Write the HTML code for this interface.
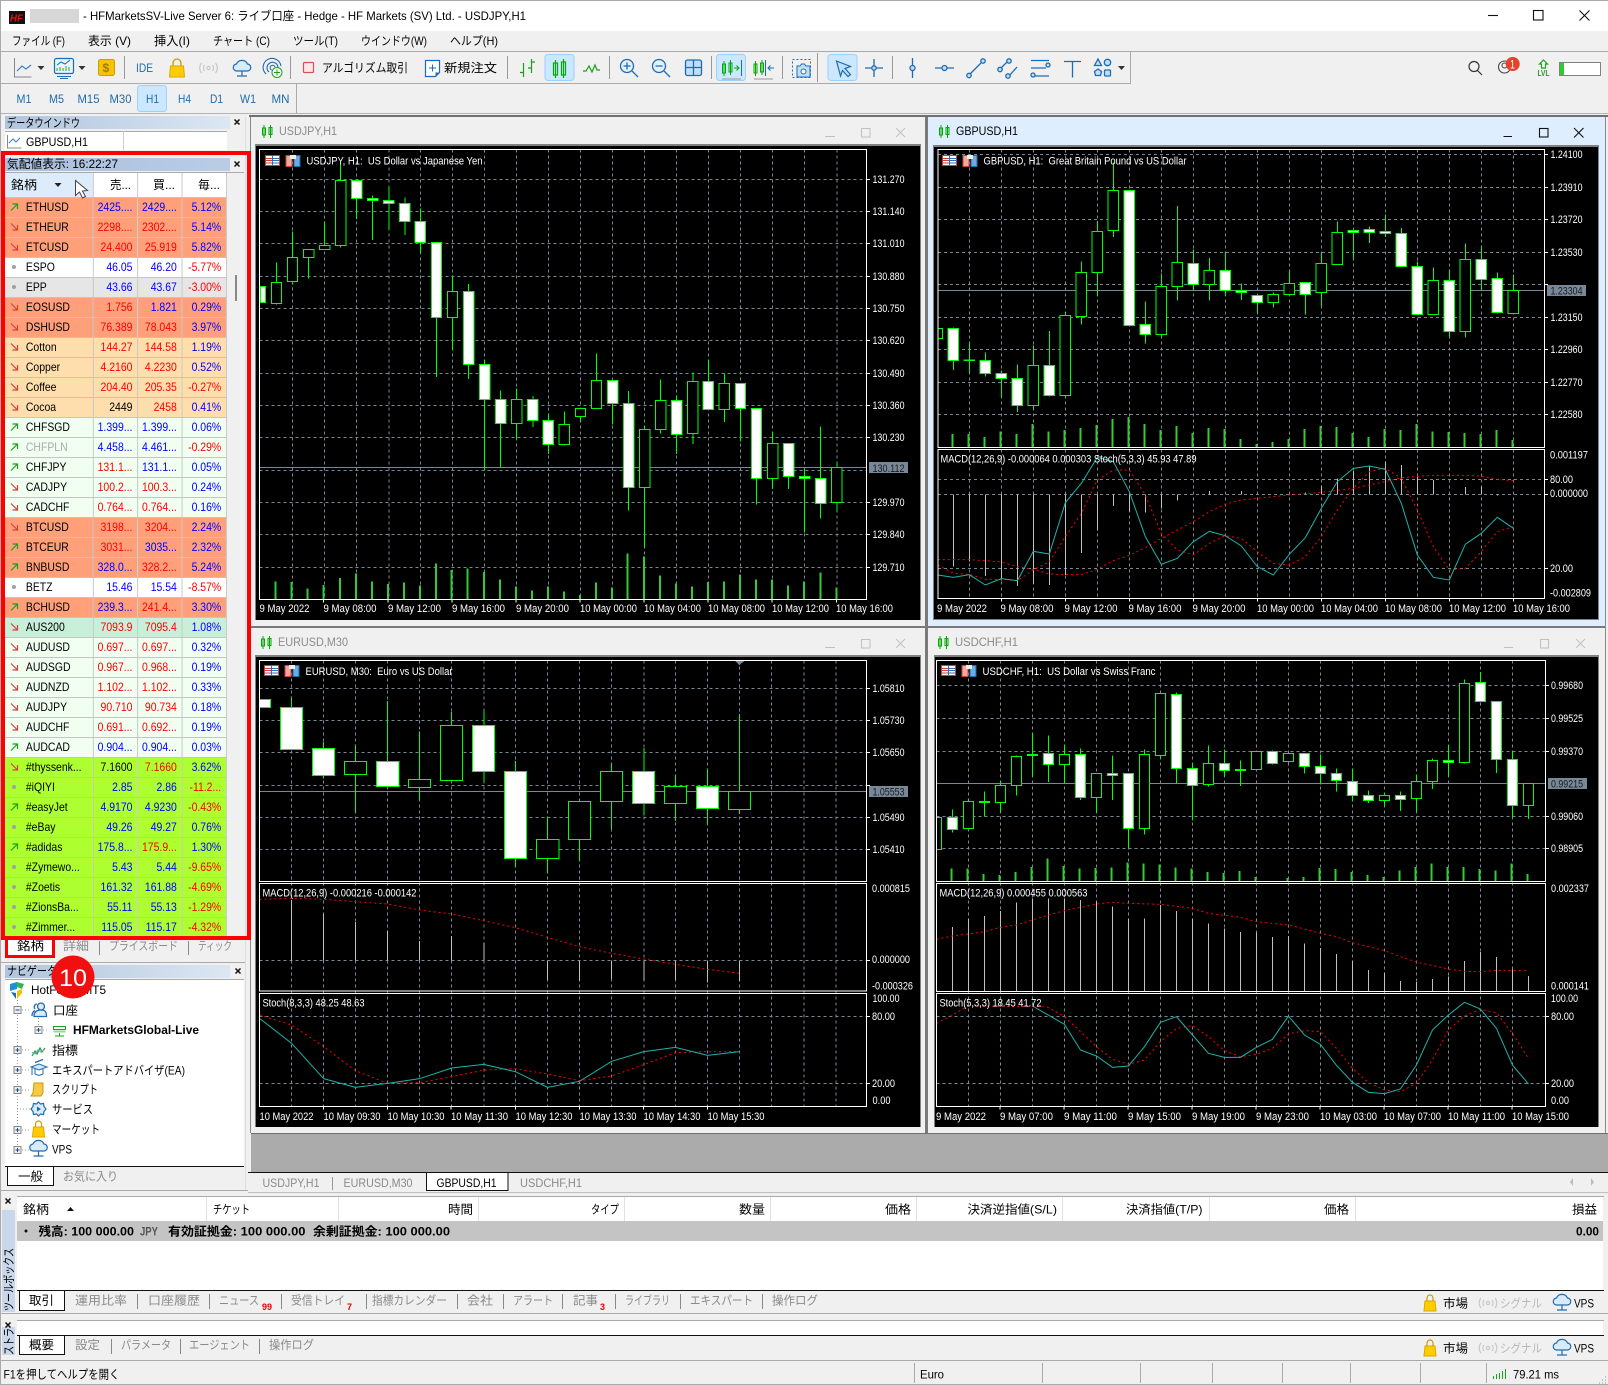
<!DOCTYPE html>
<html><head><meta charset="utf-8"><title>HFMarkets</title>
<style>
html,body{margin:0;padding:0;background:#f0f0f0;width:1608px;height:1385px;overflow:hidden}
#tb{position:absolute;left:5px;top:173px;width:254px;transform:scaleX(.87);transform-origin:0 0;z-index:0}
table{border-collapse:collapse;table-layout:fixed;width:254px;font:12px "Liberation Sans","Noto Sans CJK JP",sans-serif}
td{height:19px;line-height:16px;padding:0 5px 0 0;text-align:right;border-right:1px solid #c4c4c4;border-bottom:1px solid #c4c4c4;white-space:nowrap;overflow:hidden}
tr{height:20px}
tr.hd{height:24px}tr.hd td{height:23px;background:#fff}tr.hd td:first-child{background:#dcecfb}
td:first-child{text-align:left;padding:0 0 0 24px;color:#000}
.s td{background:#ffa07a}.m td{background:#ffdead}.h td{background:#f0fff0}.y td{background:#adff2f}.w td{background:#fff}.e td{background:#e6e6e6}.g td{background:#c8f0d8}
td.b{color:#00f}td.r{color:#f00}td.k{color:#000}
#o{position:absolute;left:0;top:0;z-index:1}
text{font:12px "Liberation Sans","Noto Sans CJK JP",sans-serif;fill:#000}
.gy{fill:#8a8a8a}.lg{fill:#b8b8b8}.bl{fill:#1f6bb0}.bd{font-weight:bold}
.x{font-size:11px;fill:#fff}.dk{font-size:11px;fill:#1a1a1a}
.sub{font-size:9px;font-weight:bold;fill:#e00000}
.cr{shape-rendering:crispEdges}
.ic{fill:none;stroke:#1f6bb0;stroke-width:1.3}
.c path{vector-effect:non-scaling-stroke;fill:none;shape-rendering:crispEdges}
.c .gr{stroke:#778899;stroke-dasharray:3 3}
.c .wk{stroke:#0f0}
.c .wb{stroke:#0f0;fill:#fff}
.c .bb{stroke:#0f0;fill:#000}
.c .vo{stroke:#32cd32;stroke-width:2}
.c .fr{stroke:#fff}
.c .hs{stroke:#c0c0c0}
.c .cu{stroke:#778899}
.c .te{stroke:#20b2aa;shape-rendering:auto}
.c .re{stroke:#f00;stroke-dasharray:2 3;shape-rendering:auto}
.c .tri{fill:#778899}
</style></head><body>
<div id="tb"><table><colgroup><col style="width:101px"><col style="width:51px"><col style="width:51px"><col style="width:51px"></colgroup>
<tr class="hd"><td></td><td></td><td></td><td></td></tr>
<tr class="s"><td>ETHUSD</td><td class="b">2425....</td><td class="b">2429....</td><td class="b">5.12%</td></tr>
<tr class="s"><td>ETHEUR</td><td class="r">2298....</td><td class="r">2302....</td><td class="b">5.14%</td></tr>
<tr class="s"><td>ETCUSD</td><td class="r">24.400</td><td class="r">25.919</td><td class="b">5.82%</td></tr>
<tr class="w"><td>ESPO</td><td class="b">46.05</td><td class="b">46.20</td><td class="r">-5.77%</td></tr>
<tr class="e"><td>EPP</td><td class="b">43.66</td><td class="b">43.67</td><td class="r">-3.00%</td></tr>
<tr class="s"><td>EOSUSD</td><td class="r">1.756</td><td class="b">1.821</td><td class="b">0.29%</td></tr>
<tr class="s"><td>DSHUSD</td><td class="r">76.389</td><td class="r">78.043</td><td class="b">3.97%</td></tr>
<tr class="m"><td>Cotton</td><td class="r">144.27</td><td class="r">144.58</td><td class="b">1.19%</td></tr>
<tr class="m"><td>Copper</td><td class="r">4.2160</td><td class="r">4.2230</td><td class="b">0.52%</td></tr>
<tr class="m"><td>Coffee</td><td class="r">204.40</td><td class="r">205.35</td><td class="r">-0.27%</td></tr>
<tr class="m"><td>Cocoa</td><td class="k">2449</td><td class="r">2458</td><td class="b">0.41%</td></tr>
<tr class="h"><td>CHFSGD</td><td class="b">1.399...</td><td class="b">1.399...</td><td class="b">0.06%</td></tr>
<tr class="h"><td style="color:#aaa">CHFPLN</td><td class="b">4.458...</td><td class="b">4.461...</td><td class="r">-0.29%</td></tr>
<tr class="h"><td>CHFJPY</td><td class="r">131.1...</td><td class="b">131.1...</td><td class="b">0.05%</td></tr>
<tr class="h"><td>CADJPY</td><td class="r">100.2...</td><td class="r">100.3...</td><td class="b">0.24%</td></tr>
<tr class="h"><td>CADCHF</td><td class="r">0.764...</td><td class="r">0.764...</td><td class="b">0.16%</td></tr>
<tr class="s"><td>BTCUSD</td><td class="r">3198...</td><td class="r">3204...</td><td class="b">2.24%</td></tr>
<tr class="s"><td>BTCEUR</td><td class="r">3031...</td><td class="b">3035...</td><td class="b">2.32%</td></tr>
<tr class="s"><td>BNBUSD</td><td class="b">328.0...</td><td class="r">328.2...</td><td class="b">5.24%</td></tr>
<tr class="w"><td>BETZ</td><td class="b">15.46</td><td class="b">15.54</td><td class="r">-8.57%</td></tr>
<tr class="s"><td>BCHUSD</td><td class="b">239.3...</td><td class="r">241.4...</td><td class="b">3.30%</td></tr>
<tr class="g"><td>AUS200</td><td class="r">7093.9</td><td class="r">7095.4</td><td class="b">1.08%</td></tr>
<tr class="h"><td>AUDUSD</td><td class="r">0.697...</td><td class="r">0.697...</td><td class="b">0.32%</td></tr>
<tr class="h"><td>AUDSGD</td><td class="r">0.967...</td><td class="r">0.968...</td><td class="b">0.19%</td></tr>
<tr class="h"><td>AUDNZD</td><td class="r">1.102...</td><td class="r">1.102...</td><td class="b">0.33%</td></tr>
<tr class="h"><td>AUDJPY</td><td class="r">90.710</td><td class="r">90.734</td><td class="b">0.18%</td></tr>
<tr class="h"><td>AUDCHF</td><td class="r">0.691...</td><td class="r">0.692...</td><td class="b">0.19%</td></tr>
<tr class="h"><td>AUDCAD</td><td class="b">0.904...</td><td class="b">0.904...</td><td class="b">0.03%</td></tr>
<tr class="y"><td>#thyssenk...</td><td class="k">7.1600</td><td class="r">7.1660</td><td class="b">3.62%</td></tr>
<tr class="y"><td>#iQIYI</td><td class="b">2.85</td><td class="b">2.86</td><td class="r">-11.2...</td></tr>
<tr class="y"><td>#easyJet</td><td class="b">4.9170</td><td class="b">4.9230</td><td class="r">-0.43%</td></tr>
<tr class="y"><td>#eBay</td><td class="b">49.26</td><td class="b">49.27</td><td class="b">0.76%</td></tr>
<tr class="y"><td>#adidas</td><td class="b">175.8...</td><td class="r">175.9...</td><td class="b">1.30%</td></tr>
<tr class="y"><td>#Zymewo...</td><td class="b">5.43</td><td class="b">5.44</td><td class="r">-9.65%</td></tr>
<tr class="y"><td>#Zoetis</td><td class="b">161.32</td><td class="b">161.88</td><td class="r">-4.69%</td></tr>
<tr class="y"><td>#ZionsBa...</td><td class="b">55.11</td><td class="b">55.13</td><td class="r">-1.29%</td></tr>
<tr class="y"><td>#Zimmer...</td><td class="b">115.05</td><td class="b">115.17</td><td class="r">-4.32%</td></tr>
</table></div>

<svg id="o" width="1608" height="1385" viewBox="0 0 1608 1385" xmlns="http://www.w3.org/2000/svg">
<defs>
<linearGradient id="g1"><stop offset="0" stop-color="#b0c4dd"/><stop offset="1" stop-color="#dce7f2"/></linearGradient>
<linearGradient id="g2"><stop offset="0" stop-color="#a8bedb"/><stop offset="1" stop-color="#bacde5"/></linearGradient>
<g id="u"><path d="M11 13.5l6.5-6.5M12.5 7h5v5" fill="none" stroke="#1ba01b" stroke-width="1.2"/></g>
<g id="d"><path d="M11 6.5l6.5 6.5M12.5 13h5V8" fill="none" stroke="#d84040" stroke-width="1.2"/></g>
<g id="p"><circle cx="14" cy="10" r="2" fill="#a0a0a0"/></g>
<g id="ci" fill="none" stroke="#0a0"><rect x=".5" y="3" width="3" height="7"/><path d="M2 0v13"/><rect x="7" y="2.5" width="3" height="7"/><path d="M8.5 0v13"/></g>
<g id="ti"><rect x=".5" y=".5" width="14" height="10" fill="#fff" stroke="#d23b3b"/><path d="M1 3.5h6M1 5.5h6M1 8h6" stroke="#d23b3b"/><path d="M8 3.5h6M8 5.5h6M8 8h6" stroke="#2a6fb5"/><path d="M7.5 1v9" stroke="#2a6fb5"/>
<path d="M21 .5h6v11h-6z" fill="#f5a8a0" stroke="#d23b3b"/><path d="M29 .5h6v11h-6z" fill="#69aee0" stroke="#1f6bb0"/><rect x="25" y="0" width="6" height="4" fill="#eee"/></g>
<g id="pl"><rect x="-3.5" y="-3.5" width="7" height="7" fill="#eee" stroke="#888"/><path d="M-2 0h4M0-2v4" stroke="#1f4f8f"/></g>
<g id="mi"><rect x="-3.5" y="-3.5" width="7" height="7" fill="#eee" stroke="#888"/><path d="M-2 0h4" stroke="#1f4f8f"/></g>
<g id="bag"><path d="M-6 8l1-10h10l1 10z" fill="#fc0" stroke="#d9a800"/><path d="M-3-2v-3a3 3 0 0 1 6 0v3" fill="none" stroke="#c89b00" stroke-width="1.2"/></g>
<g id="cl" fill="none" stroke="#1f6bb0" stroke-width="1.2"><path d="M-5 3a3.5 3.5 0 0 1-.5-7a6 6 0 0 1 11 0a3.5 3.5 0 0 1-.5 7z" fill="#d8ebfb"/><path d="M0 3v5M-5 8h10"/></g>
<g id="sig" fill="none" stroke="#c8c8c8" stroke-width="1.2"><circle r="1.6"/><path d="M-4-3a5 5 0 0 0 0 6M4-3a5 5 0 0 1 0 6M-7-5a8 8 0 0 0 0 10M7-5a8 8 0 0 1 0 10"/></g>
</defs>

<!-- window frame / bars -->
<g class="cr">
<rect x="0" y="0" width="1608" height="1" fill="#aaa"/>
<rect x="0" y="1" width="1608" height="30" fill="#fff"/>
<rect x="0" y="51" width="1608" height="1" fill="#aaa"/>
<rect x="0" y="83" width="1130" height="1" fill="#aaa"/>
<rect x="1130" y="51" width="1" height="33" fill="#aaa"/>
<rect x="296" y="84" width="1" height="29" fill="#aaa"/>
<rect x="0" y="113" width="1608" height="1" fill="#b4b4b4"/>
<rect x="249" y="115" width="1359" height="2" fill="#707070"/>
<rect x="0" y="0" width="1" height="1385" fill="#aaa"/>
<!-- MDI -->
<rect x="928" y="117" width="677" height="509" fill="#deeeff"/>
<rect x="925" y="117" width="3" height="510" fill="#7a7a7a"/>
<rect x="250" y="626" width="1355" height="2" fill="#7a7a7a"/>
<rect x="925" y="628" width="3" height="505" fill="#7a7a7a"/>
<rect x="251" y="1133" width="1357" height="39" fill="#ababab"/>
<rect x="251" y="1133" width="1357" height="1" fill="#6f6f6f"/>
<rect x="250" y="117" width="1" height="1016" fill="#8a8a8a"/>
<rect x="1605" y="117" width="1" height="1016" fill="#8a8a8a"/>
<!-- black chart areas -->
<rect x="255" y="144" width="666" height="476" fill="#808080"/>
<rect x="256" y="146" width="664" height="474" fill="#000"/>
<rect x="933" y="145" width="666" height="475" fill="#808080"/>
<rect x="934" y="147" width="664" height="472" fill="#000"/>
<rect x="255" y="655" width="666" height="472" fill="#808080"/>
<rect x="256" y="657" width="664" height="470" fill="#000"/>
<rect x="934" y="655" width="665" height="472" fill="#808080"/>
<rect x="935" y="657" width="663" height="470" fill="#000"/>
<!-- chart tabs -->
<rect x="248" y="1172" width="1360" height="20" fill="#f0f0f0"/>
<rect x="248" y="1172" width="1360" height="1" fill="#111"/>
<rect x="248" y="1192" width="1360" height="1" fill="#c0c0c0"/>
<rect x="426" y="1173" width="82" height="18" fill="#fff"/>
<path d="M426.5 1173v17.5h81.5v-17.5" fill="none" stroke="#111"/>
<rect x="332" y="1177" width="1" height="13" fill="#999"/>
<!-- toolbox -->
<rect x="17" y="1196" width="1587" height="1" fill="#aaa"/>
<rect x="17" y="1197" width="1586" height="93" fill="#fff"/>
<rect x="17" y="1221" width="1586" height="20" fill="#c4c4c4"/>
<path d="M206.5 1197v24M338.5 1197v24M478.5 1197v24M624.5 1197v24M770.5 1197v24M916.5 1197v24M1062.5 1197v24M1209.5 1197v24M1355.5 1197v24" stroke="#e0e0e0"/>
<rect x="17" y="1290" width="1587" height="1" fill="#111"/>
<rect x="19" y="1291" width="45" height="19" fill="#fff"/>
<path d="M19.5 1291v19.5h45v-19.5" fill="none" stroke="#111"/>
<path d="M137.5 1294v15M209.5 1294v15M281.5 1294v15M366.5 1294v15M457.5 1294v15M503.5 1294v15M562.5 1294v15M615.5 1294v15M680.5 1294v15M762.5 1294v15" stroke="#888"/>
<rect x="0" y="1313" width="1608" height="1" fill="#aaa"/>
<rect x="2" y="1210" width="13" height="102" fill="#c8d8ea"/>
<!-- tester -->
<rect x="17" y="1320" width="1587" height="1" fill="#aaa"/>
<rect x="17" y="1321" width="1586" height="14" fill="#fff"/>
<rect x="17" y="1335" width="1587" height="1" fill="#111"/>
<rect x="19" y="1336" width="45" height="18" fill="#fff"/>
<path d="M19.5 1336v18.5h45v-18.5" fill="none" stroke="#111"/>
<path d="M111.5 1339v15M180.5 1339v15M259.5 1339v15" stroke="#888"/>
<rect x="2" y="1327" width="13" height="28" fill="#c8d8ea"/>
<!-- status -->
<rect x="0" y="1360" width="1608" height="1" fill="#aaa"/>
<rect x="0" y="1384" width="1608" height="1" fill="#aaa"/>
<path d="M914.5 1363v20M1042.5 1363v20M1140.5 1363v20M1212.5 1363v20M1282.5 1363v20M1350.5 1363v20M1420.5 1363v20M1486.5 1363v20" stroke="#aaa"/>
<!-- left panels -->
<rect x="5" y="120" width="225" height="13" fill="url(#g1)" transform="translate(0,-4)"/>
<rect x="5" y="131" width="222" height="19" fill="#fff"/>
<rect x="5" y="131" width="222" height="1" fill="#aaa"/>
<rect x="123" y="131" width="1" height="19" fill="#ccc"/>
<rect x="5" y="158" width="225" height="13" fill="url(#g2)"/>
<rect x="5" y="172" width="239" height="1" fill="#aaa"/>
<rect x="235" y="275" width="2" height="26" fill="#888"/>
<rect x="8" y="938" width="44" height="18" fill="#fff"/>
<path d="M99.5 941v14M188.5 941v14" stroke="#888"/>
<rect x="0" y="962" width="246" height="1" fill="#aaa"/>
<rect x="5" y="965" width="225" height="13" fill="url(#g1)"/>
<rect x="5" y="979" width="239" height="187" fill="#fff"/>
<rect x="5" y="979" width="239" height="1" fill="#aaa"/>
<rect x="5" y="1166" width="239" height="1" fill="#111"/>
<rect x="7" y="1167" width="46" height="18" fill="#fff"/>
<path d="M7.5 1167v18.5h46v-18.5" fill="none" stroke="#111"/>
<rect x="245" y="117" width="1" height="1073" fill="#ddd"/>
<rect x="0" y="1190" width="248" height="1" fill="#aaa"/>
</g>

<!-- Buttons -->
<g fill="#cce8ff" stroke="#99d1ff"><rect x="137.5" y="85.5" width="29" height="26" rx="3"/><rect x="545" y="54.5" width="29" height="26" rx="3"/><rect x="716.5" y="54.5" width="29" height="26" rx="3"/><rect x="828" y="54.5" width="29" height="26" rx="3"/></g>

<!-- toolbar separators -->
<path class="cr" d="M124.5 56v23M290.5 56v23M507.5 56v23M609.5 56v23M711.5 56v23M782.5 56v23M817.5 53v29M892.5 56v23" stroke="#999"/>

<!-- Toolbar icons -->
<path d="M14.5 58v19h17" fill="none" stroke="#888"/><path d="M17 71l5-5 4 3 5-4" fill="none" stroke="#3a80c0" stroke-width="1.2"/>
<path d="M37.5 66h7l-3.5 4zM78.5 66h7l-3.500 4zM1118 66h7l-3.500 4z" fill="#333"/>
<rect x="54.500" y="58.500" width="19" height="15" rx="2" fill="#e8f3fc" stroke="#1f6bb0" stroke-width="1.2"/><path d="M57 71v-3M60 71v-4M63 71v-3M66 71v-5M69 71v-4" stroke="#2aa82a"/><path d="M57 65l4-3 4 2 5-4" fill="none" stroke="#1f6bb0"/><path d="M57 76.500h14M60 78.500h8" stroke="#1f6bb0"/>
<rect x="98.500" y="59.500" width="16" height="16" rx="2" fill="#f5c400" stroke="#c9a000"/><text x="102.500" y="72" class="bd" style="fill:#a57700">$</text>
<path d="M169.500 77l1-11h13l1 11z" fill="#fc0" stroke="#d9a800"/><path d="M173 66v-3a4 4 0 0 1 8 0v3" fill="none" stroke="#c89b00" stroke-width="1.3"/>
<use href="#sig" x="208.500" y="68"/>
<use href="#cl" x="242" y="68"/>
<g fill="none" stroke="#1f6bb0" stroke-width="1.1"><path d="M266 74a9 9 0 1 1 15-8M269 72a5.500 5.500 0 1 1 9-4.500M271.500 70a2.500 2.500 0 1 1 3.500-3"/></g><circle cx="277" cy="72.500" r="5" fill="#fff" stroke="#1aa01a"/><path d="M274 72.500h6M277 69.500v6" stroke="#1aa01a"/>
<rect x="303.500" y="62.500" width="10" height="10" rx="1" fill="#ffe8e8" stroke="#e05050" stroke-width="1.2"/>
<path d="M425.500 60.500h14v12l-4 4h-10z" fill="#fff" stroke="#1f6bb0" stroke-width="1.2"/><path d="M429 68h7M432.500 64.500v7" stroke="#1f6bb0"/><path d="M435.500 76.500l4-4h-4z" fill="#1f6bb0"/>
<path d="M523.500 63v14M520 72.500h3.500M531.500 59v14M531.500 62h3.500M528 68h3.500" fill="none" stroke="#1aa01a" stroke-width="1.2"/>
<g fill="none" stroke="#0a0" stroke-width="1.2"><rect x="553.500" y="63" width="4" height="12"/><path d="M555.500 60v18"/><rect x="561.500" y="62" width="4" height="13"/><path d="M563.500 59v19"/></g>
<path d="M583 71h3l3-5 3 6 3-7 2 5h3" fill="none" stroke="#1aa01a" stroke-width="1.2"/>
<g class="ic"><circle cx="627" cy="66" r="6.500" fill="#e3f1fc"/><path d="M623.500 66h7M627 62.500v7M632 71l6 6"/><circle cx="659" cy="66" r="6.500" fill="#e3f1fc"/><path d="M655.500 66h7M664 71l6 6"/><rect x="685.500" y="60" width="16" height="15.500" rx="2" fill="#bfe0fa"/><path d="M693.500 60v15.500M685.500 67.500h16"/></g>
<g fill="none" stroke="#0a0"><rect x="722.500" y="64" width="3" height="9"/><path d="M724 61v15"/><rect x="729" y="63" width="3" height="9"/><path d="M730.500 60v15"/><path d="M734 68h5M736.500 65.500l2.500 2.500-2.500 2.500"/></g><path d="M741.500 60v16" stroke="#1f6bb0"/><path d="M722 79h19" stroke="#999"/>
<g fill="none" stroke="#0a0"><rect x="754" y="64" width="3" height="9"/><path d="M755.500 61v15"/><rect x="760.500" y="63" width="3" height="9"/><path d="M762 60v15"/></g><path d="M765.500 60v16M768 68h6M770.500 65.500l-2.500 2.500 2.500 2.500" fill="none" stroke="#1f6bb0"/><path d="M754 79h19" stroke="#999"/>
<rect x="792.500" y="59.500" width="18" height="18" fill="none" stroke="#1f6bb0" stroke-dasharray="2 2"/><path d="M797 66h3l1.500-2h3l1.500 2h4v11h-13z" fill="#bfe0fa" stroke="#1f6bb0"/><circle cx="803.500" cy="71.500" r="2.500" fill="#fff" stroke="#1f6bb0"/>
<path d="M836.500 61l14 5.500-5.500 2 5.500 6-2.500 2-5.500-6-2 5.500z" fill="#bfe0fa" stroke="#1f6bb0" stroke-width="1.2"/>
<g class="ic"><path d="M865 68h18M874 59v18"/><circle cx="874" cy="68" r="2.200" fill="#bfe0fa"/><path d="M912.500 58v20"/><circle cx="912.500" cy="68" r="2.500" fill="#bfe0fa"/><path d="M935 68h19"/><circle cx="944.500" cy="68" r="2.500" fill="#bfe0fa"/><path d="M970 74l11-11"/><circle cx="969" cy="75.500" r="2.200" fill="#bfe0fa"/><circle cx="983" cy="61" r="2.200" fill="#bfe0fa"/><path d="M1001 68l7-7M1009 76l8-9"/><circle cx="1000" cy="69.500" r="2.200" fill="#bfe0fa"/><circle cx="1009" cy="61" r="2.200" fill="#bfe0fa"/><circle cx="1008" cy="76" r="2.200" fill="#bfe0fa"/><path d="M1031 60.500h18M1031 68h15M1034 76h15"/><circle cx="1048" cy="65" r="2" fill="#bfe0fa"/><circle cx="1033" cy="75" r="2" fill="#bfe0fa"/><path d="M1064 61.500h17M1072.500 61.500v16"/><path d="M1098 59l3.500 6.500h-7z" fill="#bfe0fa"/><circle cx="1107.500" cy="62.500" r="3.200" fill="#bfe0fa"/><path d="M1098 69l3.500 2.500-1 4h-5l-1-4z" fill="#bfe0fa"/><rect x="1104.500" y="70" width="6" height="6" rx="1" fill="#bfe0fa"/></g>
<circle cx="1474" cy="66.500" r="5" fill="none" stroke="#333" stroke-width="1.200"/><path d="M1477.500 70.500l4.500 4.500" stroke="#333" stroke-width="1.200"/>
<circle cx="1504.500" cy="67" r="6" fill="none" stroke="#444" stroke-width="1.100"/><circle cx="1504.500" cy="65.500" r="2.500" fill="none" stroke="#444"/>
<circle cx="1512.700" cy="64" r="7" fill="#e8402a"/><text x="1510" y="68.500" textLength="5" lengthAdjust="spacingAndGlyphs" style="fill:#fff">1</text>
<path d="M1543.500 60l4 4h-2v4h-4v-4h-2z" fill="#fff" stroke="#1aa01a" stroke-width="1.200"/><text x="1537.500" y="76" textLength="12" lengthAdjust="spacingAndGlyphs" style="font-size:8px;font-weight:bold;fill:#1aa01a">LVL</text>
<rect x="1559.500" y="62.500" width="41" height="13" fill="#fff" stroke="#808080"/><rect x="1560" y="63" width="4" height="12" fill="#2ecc2e"/>

<!-- title bar -->
<rect x="9" y="11" width="16" height="13" fill="#111"/><text x="10" y="21.500" textLength="13" lengthAdjust="spacingAndGlyphs" class="bd" style="font-size:10px;font-style:italic;fill:#d11">HF</text>
<rect x="30" y="9" width="49" height="14" fill="#d6d6d6"/>
<text x="83" y="20" textLength="443" lengthAdjust="spacingAndGlyphs">- HFMarketsSV-Live Server 6: ライブ口座 - Hedge - HF Markets (SV) Ltd. - USDJPY,H1</text>
<path d="M1488 15.500h10" stroke="#111" stroke-width="1.100"/><rect x="1533.500" y="10.500" width="9.500" height="9.500" fill="none" stroke="#111" stroke-width="1.100"/><path d="M1579.500 10.500l10 10m0-10l-10 10" stroke="#111" stroke-width="1.100"/>
<!-- menu -->
<text x="12" y="45" textLength="53" lengthAdjust="spacingAndGlyphs">ファイル (F)</text>
<text x="88" y="45" textLength="43" lengthAdjust="spacingAndGlyphs">表示 (V)</text>
<text x="154" y="45" textLength="36" lengthAdjust="spacingAndGlyphs">挿入(I)</text>
<text x="213" y="45" textLength="57" lengthAdjust="spacingAndGlyphs">チャート (C)</text>
<text x="293" y="45" textLength="45" lengthAdjust="spacingAndGlyphs">ツール(T)</text>
<text x="361" y="45" textLength="66" lengthAdjust="spacingAndGlyphs">ウインドウ(W)</text>
<text x="450" y="45" textLength="48" lengthAdjust="spacingAndGlyphs">ヘルプ(H)</text>
<text x="136" y="72" textLength="17" lengthAdjust="spacingAndGlyphs" class="bl">IDE</text>
<text x="322" y="72" textLength="86" lengthAdjust="spacingAndGlyphs">アルゴリズム取引</text>
<text x="444" y="72" textLength="53" lengthAdjust="spacingAndGlyphs">新規注文</text>
<g class="bl" text-anchor="middle">
<text class="bl" x="24" y="103" textLength="15" lengthAdjust="spacingAndGlyphs">M1</text>
<text class="bl" x="56.500" y="103" textLength="15" lengthAdjust="spacingAndGlyphs">M5</text>
<text class="bl" x="88.500" y="103" textLength="22" lengthAdjust="spacingAndGlyphs">M15</text>
<text class="bl" x="120.500" y="103" textLength="22" lengthAdjust="spacingAndGlyphs">M30</text>
<text class="bl" x="152.500" y="103" textLength="13" lengthAdjust="spacingAndGlyphs">H1</text>
<text class="bl" x="184.500" y="103" textLength="13" lengthAdjust="spacingAndGlyphs">H4</text>
<text class="bl" x="216.500" y="103" textLength="13" lengthAdjust="spacingAndGlyphs">D1</text>
<text class="bl" x="248" y="103" textLength="16" lengthAdjust="spacingAndGlyphs">W1</text>
<text class="bl" x="280.500" y="103" textLength="18" lengthAdjust="spacingAndGlyphs">MN</text>
</g>

<!-- Left panel text -->
<text x="7" y="127" textLength="73" lengthAdjust="spacingAndGlyphs">データウインドウ</text>
<path d="M234.500 119.500l5 5m0-5l-5 5M234.500 161.500l5 5m0-5l-5 5M235.500 968.500l5 5m0-5l-5 5M5.500 1198.500l5 5m0-5l-5 5M5.500 1322.500l5 5m0-5l-5 5" stroke="#111" stroke-width="1.500"/>
<path d="M7.500 135v13h14" fill="none" stroke="#888"/><path d="M9 143l4-4 3 3 4-4" fill="none" stroke="#3a80c0"/>
<text x="26" y="146" textLength="62" lengthAdjust="spacingAndGlyphs">GBPUSD,H1</text>
<text x="7" y="168" textLength="111" lengthAdjust="spacingAndGlyphs">気配値表示: 16:22:27</text>
<text x="11" y="189" textLength="26" lengthAdjust="spacingAndGlyphs">銘柄</text>
<path d="M54.500 183h7l-3.500 4z" fill="#222"/>
<text x="110" y="189" textLength="21" lengthAdjust="spacingAndGlyphs">売...</text>
<text x="153" y="189" textLength="22" lengthAdjust="spacingAndGlyphs">買...</text>
<text x="198" y="189" textLength="22" lengthAdjust="spacingAndGlyphs">毎...</text>
<use href="#u" y="197"/><use href="#d" y="217"/><use href="#d" y="237"/><use href="#p" y="257"/><use href="#p" y="277"/><use href="#d" y="297"/><use href="#d" y="317"/><use href="#d" y="337"/><use href="#d" y="357"/><use href="#d" y="377"/><use href="#d" y="397"/><use href="#u" y="417"/><use href="#u" y="437"/><use href="#u" y="457"/><use href="#d" y="477"/><use href="#d" y="497"/><use href="#d" y="517"/><use href="#u" y="537"/><use href="#u" y="557"/><use href="#p" y="577"/><use href="#u" y="597"/><use href="#d" y="617"/><use href="#d" y="637"/><use href="#d" y="657"/><use href="#d" y="677"/><use href="#d" y="697"/><use href="#d" y="717"/><use href="#u" y="737"/><use href="#d" y="757"/><use href="#p" y="777"/><use href="#u" y="797"/><use href="#p" y="817"/><use href="#u" y="837"/><use href="#p" y="857"/><use href="#p" y="877"/><use href="#p" y="897"/><use href="#p" y="917"/>
<text x="17" y="950" textLength="27" lengthAdjust="spacingAndGlyphs">銘柄</text>
<text x="63" y="950" textLength="26" lengthAdjust="spacingAndGlyphs" class="gy">詳細</text>
<text x="109" y="950" textLength="69" lengthAdjust="spacingAndGlyphs" class="gy">プライスボード</text>
<text x="198" y="950" textLength="34" lengthAdjust="spacingAndGlyphs" class="gy">ティック</text>
<text x="7" y="975" textLength="50" lengthAdjust="spacingAndGlyphs">ナビゲータ</text>

<!-- Navigator -->
<path d="M17.500 997v153M38.500 1018v12M22 1010h8M22 1050h8M22 1070h8M22 1090h8M17 1109h13M22 1130h8M22 1150h8M43 1030h6" fill="none" stroke="#999" stroke-dasharray="1 2"/>
<path d="M10 984l7-2v7l-7 2z" fill="#1f8fd8"/><path d="M17 982l7 2-2 5-5-2z" fill="#3bb54a"/><path d="M17 991l5-2v4l-5 6z" fill="#f2c000"/><path d="M11 992l5 1v6z" fill="#1f6bb0"/>
<text x="31" y="994" textLength="75" lengthAdjust="spacingAndGlyphs">HotForex MT5</text>
<use href="#mi" x="17.500" y="1010"/><use href="#pl" x="38.500" y="1030"/><use href="#pl" x="17.500" y="1050"/><use href="#pl" x="17.500" y="1070"/><use href="#pl" x="17.500" y="1090"/><use href="#pl" x="17.500" y="1130"/><use href="#pl" x="17.500" y="1150"/>
<g class="ic"><circle cx="41" cy="1006.500" r="3.500" fill="#d8ebfb"/><path d="M34 1016.500c0-5 3-6.500 7-6.500s5.500 1.500 5.500 6.500z" fill="#d8ebfb"/><path d="M35 1009a3 3 0 0 1 2-5M32 1016c0-3 1-4.500 3-5.500"/><path d="M35 1062.500l8-3"/></g>
<rect x="53.500" y="1026.500" width="12" height="3" fill="none" stroke="#1aa01a"/><rect x="53.500" y="1030.500" width="12" height="2" fill="#8fdc8f"/><path d="M59.500 1033v3M55 1036h9" stroke="#1aa01a"/>
<path d="M32 1056l3-5 2 3 3-6 2 4 3-4" fill="none" stroke="#1aa01a" stroke-width="1.200"/><path d="M32 1052l3 2 3-4 3 2 4-3" fill="none" stroke="#5aa0d8"/>
<path d="M31 1067l8-3 8 3-8 3z" fill="#d8ebfb" stroke="#1f6bb0"/><path d="M35 1069v5l4 1.500 4-1.500v-5M32 1068v7" fill="none" stroke="#1f6bb0"/>
<path d="M34 1083h9v10l-2 3h-10l2-3z" fill="#f7c948" stroke="#c89b00"/>
<path d="M38.500 1102l2 2 3-.5.500 3 2 2.500-2 2.500-.5 3-3-.5-2 2-2-2-3 .5-.5-3-2-2.500 2-2.500.5-3 3 .5z" fill="#d8ebfb" stroke="#1f6bb0" stroke-width="1.200"/><path d="M37 1106.500l4 2.500-4 2.500z" fill="#1f6bb0"/>
<use href="#bag" x="38.500" y="1129"/><use href="#cl" x="38.500" y="1148"/>
<text x="53" y="1014.500" textLength="25" lengthAdjust="spacingAndGlyphs">口座</text>
<text x="73" y="1034" textLength="126" lengthAdjust="spacingAndGlyphs" class="bd">HFMarketsGlobal-Live</text>
<text x="52" y="1054.500" textLength="26" lengthAdjust="spacingAndGlyphs">指標</text>
<text x="52" y="1074.500" textLength="133" lengthAdjust="spacingAndGlyphs">エキスパートアドバイザ(EA)</text>
<text x="52" y="1093.500" textLength="46" lengthAdjust="spacingAndGlyphs">スクリプト</text>
<text x="52" y="1113.500" textLength="41" lengthAdjust="spacingAndGlyphs">サービス</text>
<text x="52" y="1133.500" textLength="48" lengthAdjust="spacingAndGlyphs">マーケット</text>
<text x="52" y="1153.500" textLength="20" lengthAdjust="spacingAndGlyphs">VPS</text>
<text x="18" y="1180.500" textLength="25" lengthAdjust="spacingAndGlyphs">一般</text>
<text x="63" y="1180.500" textLength="55" lengthAdjust="spacingAndGlyphs" class="gy">お気に入り</text>

<!-- CHARTS -->
<svg class="c" x="250" y="120" width="680" height="520" viewBox="0 0 1568 1560" preserveAspectRatio="none">
<path class="gr" d="M22 178H1422M22 274H1422M22 370H1422M22 469H1422M22 565H1422M22 661H1422M22 760H1422M22 856H1422M22 952H1422M22 1051H1422M22 1147H1422M22 1243H1422M22 1342H1422M98 88V1438M172 88V1438M246 88V1438M320 88V1438M393 88V1438M467 88V1438M541 88V1438M615 88V1438M688 88V1438M762 88V1438M836 88V1438M910 88V1438M984 88V1438M1057 88V1438M1131 88V1438M1205 88V1438M1279 88V1438M1353 88V1438"/>
<path class="vo" d="M59 1438V1384M96 1438V1386M133 1438V1405M170 1438V1395M207 1438V1374M244 1438V1360M281 1438V1384M318 1438V1392M355 1438V1387M392 1438V1396M429 1438V1330M465 1438V1350M502 1438V1345M539 1438V1356M576 1438V1378M613 1438V1399M650 1438V1411M687 1438V1399M724 1438V1414M761 1438V1425M798 1438V1387M835 1438V1402M871 1438V1300M908 1438V1309M945 1438V1366M982 1438V1390M1019 1438V1399M1056 1438V1386M1093 1438V1384M1130 1438V1363M1167 1438V1378M1204 1438V1378M1241 1438V1396M1278 1438V1384M1315 1438V1357M1352 1438V1402"/>
<path class="cu" d="M22 1042H1422"/>
<path class="wk" d="M61 427V553M98 334V494M135 388V476M172 305V388M209 130V383M246 181V297M283 226V360M320 203V330M357 232V345M393 266V400M430 368V771M467 466V692M504 492V777M541 718V1050M578 811V1042M615 805V957M652 828V921M688 880V1002M725 874V977M762 865V906M799 700V865M836 781V913M873 813V1172M910 916V1283M947 778V941M984 826V1002M1021 757V972M1057 718V868M1094 760V906M1131 790V965M1168 865V1154M1205 935V1107M1242 970V1107M1279 1045V1237M1316 919V1196M1353 1024V1175"/>
<path class="wb" d="M24 500h12v47h-12zM234 181h24v54h-24zM271 235h24v6h-24zM308 241h24v9h-24zM345 250h24v54h-24zM381 304h24v64h-24zM418 368h24v224h-24zM492 514h24v219h-24zM529 733h24v105h-24zM566 838h24v72h-24zM640 838h24v63h-24zM676 901h24v72h-24zM824 781h24v69h-24zM861 850h24v252h-24zM972 841h24v102h-24zM1045 784h24v84h-24zM1119 790h24v75h-24zM1156 865h24v210h-24zM1230 970h24v99h-24zM1267 1069h24v6h-24zM1304 1075h24v75h-24z"/>
<path class="bb" d="M49 488h24v63h-24zM86 412h24v73h-24zM123 388h24v24h-24zM160 376h24v12h-24zM197 181h24v195h-24zM455 514h24v78h-24zM603 838h24v72h-24zM713 913h24v60h-24zM750 865h24v24h-24zM787 781h24v84h-24zM898 928h24v174h-24zM935 841h24v87h-24zM1009 784h24v156h-24zM1082 790h24v78h-24zM1193 970h24v105h-24zM1341 1042h24v105h-24z"/>
<path class="fr" d="M22 88H1422V1438H22zM1422 178h8M1422 274h8M1422 370h8M1422 469h8M1422 565h8M1422 661h8M1422 760h8M1422 856h8M1422 952h8M1422 1147h8M1422 1243h8M1422 1342h8M170 1438v10M318 1438v10M466 1438v10M613 1438v10M761 1438v10M909 1438v10M1056 1438v10M1204 1438v10M1352 1438v10"/>
</svg>

<svg class="c" x="930" y="110" width="678" height="520" viewBox="0 0 1568 1560" preserveAspectRatio="none">
<path class="gr" d="M18 133H1421M18 232H1421M18 328H1421M18 427H1421M18 523H1421M18 622H1421M18 718H1421M18 817H1421M18 913H1421M18 1108H1421M18 1153H1421M18 1375H1421M91 118V1465M165 118V1465M239 118V1465M313 118V1465M387 118V1465M461 118V1465M535 118V1465M609 118V1465M683 118V1465M757 118V1465M831 118V1465M905 118V1465M979 118V1465M1053 118V1465M1127 118V1465M1201 118V1465M1275 118V1465M1349 118V1465"/>
<path class="vo" d="M52 1012V972M89 1012V972M126 1012V981M163 1012V964M200 1012V972M237 1012V942M274 1012V964M311 1012V960M348 1012V954M385 1012V945M422 1012V927M459 1012V921M496 1012V942M533 1012V960M570 1012V948M607 1012V969M644 1012V954M681 1012V957M718 1012V987M755 1012V1002M792 1012V996M829 1012V987M866 1012V957M903 1012V948M940 1012V951M977 1012V969M1014 1012V981M1051 1012V957M1088 1012V960M1125 1012V942M1162 1012V964M1199 1012V966M1236 1012V969M1273 1012V972M1310 1012V960M1347 1012V990"/>
<path class="cu" d="M18 541H1421"/>
<path class="wk" d="M54 652V780M91 698V791M128 727V800M165 781V863M202 763V906M239 706V899M276 663V860M313 604V863M350 454V644M387 333V560M424 157V381M461 241V650M498 574V701M535 490V683M572 288V572M609 418V541M646 444V572M683 424V556M720 520V570M757 556V610M794 547V593M831 481V553M868 517V614M905 427V590M942 334V463M979 361V449M1016 349V399M1053 313V381M1090 354V469M1127 454V613M1164 472V613M1201 478V683M1238 400V683M1275 408V541M1312 487V610M1349 493V613"/>
<path class="wb" d="M42 655h24v96h-24zM79 750h24v2h-24zM116 751h24v39h-24zM153 790h24v15h-24zM190 805h24v81h-24zM264 766h24v90h-24zM449 241h24v405h-24zM486 643h24v30h-24zM597 460h24v63h-24zM671 481h24v60h-24zM708 541h24v6h-24zM745 556h24v21h-24zM856 517h24v36h-24zM967 361h24v6h-24zM1004 358h24v9h-24zM1041 364h24v6h-24zM1078 370h24v99h-24zM1115 469h24v144h-24zM1189 511h24v153h-24zM1263 448h24v60h-24zM1300 505h24v102h-24z"/>
<path class="bb" d="M18 655h11v31h-11zM227 766h24v120h-24zM301 616h24v240h-24zM338 487h24v132h-24zM375 364h24v123h-24zM412 241h24v120h-24zM523 529h24v144h-24zM560 457h24v72h-24zM634 481h24v42h-24zM782 553h24v24h-24zM819 520h24v33h-24zM893 460h24v87h-24zM930 367h24v96h-24zM1152 511h24v102h-24zM1226 448h24v216h-24zM1337 541h24v69h-24z"/>
<path class="hs" d="M54 1153V1370M91 1153V1355M128 1153V1398M165 1153V1412M202 1153V1428M239 1153V1422M276 1153V1425M313 1153V1395M350 1153V1329M387 1153V1262M424 1153V1188M461 1153V1204M498 1153V1207M535 1153V1195M572 1153V1171M646 1153V1143M720 1153V1143M868 1153V1148M905 1153V1128M942 1153V1106M979 1153V1083M1016 1153V1070M1053 1153V1054M1090 1153V1065M1127 1153V1098M1164 1153V1110M1238 1153V1131M1275 1153V1130M1312 1153V1157"/>
<path class="re" d="M18 1349L91 1349L128 1352L165 1356L202 1370L239 1378L276 1392L313 1394L350 1394L387 1378L424 1352L461 1336L498 1313L535 1285L572 1260L609 1235L646 1205L683 1182L720 1170L757 1165L831 1155L905 1147L979 1135L1053 1115L1090 1103L1127 1099L1164 1096L1238 1096L1275 1098L1312 1108L1349 1112"/>
<path class="re" d="M18 1365L54 1390L91 1393L128 1408L165 1408L202 1412L239 1380L276 1355L313 1280L350 1210L387 1110L424 1080L461 1080L498 1155L535 1270L572 1320L609 1335L646 1300L683 1277L720 1285L757 1325L794 1360L831 1365L868 1340L905 1280L942 1200L979 1135L1016 1085L1053 1075L1090 1105L1127 1200L1164 1310L1201 1380L1238 1375L1275 1325L1312 1265L1349 1250"/>
<path class="te" d="M18 1395L54 1402L91 1394L128 1425L165 1406L202 1412L239 1324L276 1332L313 1178L350 1120L387 1042L424 1055L461 1145L498 1280L535 1363L572 1345L609 1295L646 1264L683 1277L720 1308L757 1370L794 1395L831 1333L868 1283L905 1195L942 1115L979 1075L1016 1068L1053 1078L1090 1180L1127 1335L1164 1402L1201 1410L1238 1303L1275 1270L1312 1222L1349 1255"/>
<path class="fr" d="M18 118H1421V1012H18zM18 1018H1421V1465H18zM1421 133h8M1421 232h8M1421 328h8M1421 427h8M1421 523h8M1421 622h8M1421 718h8M1421 817h8M1421 913h8M1421 1108h8M1421 1153h8M1421 1375h8M165 1465v10M313 1465v10M461 1465v10M609 1465v10M757 1465v10M905 1465v10M1053 1465v10M1201 1465v10M1349 1465v10"/>
</svg>

<svg class="c" x="250" y="630" width="680" height="520" viewBox="0 0 1568 1560" preserveAspectRatio="none">
<path class="gr" d="M22 175H1422M22 271H1422M22 367H1422M22 466H1422M22 562H1422M22 658H1422M22 991H1422M22 1159H1422M22 1360H1422M96 92V1429M170 92V1429M243 92V1429M317 92V1429M391 92V1429M465 92V1429M539 92V1429M612 92V1429M686 92V1429M760 92V1429M834 92V1429M908 92V1429M981 92V1429M1055 92V1429M1129 92V1429M1203 92V1429M1277 92V1429M1351 92V1429"/>
<path class="cu" d="M22 484H1422"/>
<path class="wk" d="M96 200V358M170 336V446M243 344V547M317 213V469M391 304V512M465 246V454M539 243V458M612 393V713M686 560V731M760 514V695M834 400V596M908 354V556M981 433V573M1055 415V584M1129 252V552"/>
<path class="wb" d="M22 209h25v23h-25zM70 232h51v126h-51zM144 355h51v81h-51zM292 394h51v75h-51zM513 286h51v138h-51zM587 424h51v261h-51zM882 424h51v96h-51zM1029 469h51v66h-51z"/>
<path class="bb" d="M218 394h51v39h-51zM365 448h51v24h-51zM439 286h51v165h-51zM661 628h51v57h-51zM734 514h51v114h-51zM808 424h51v90h-51zM956 469h51v51h-51zM1103 484h51v54h-51z"/>
<path class="hs" d="M96 991V810M170 991V850M243 991V876M317 991V902M391 991V933M465 991V918M539 991V937M686 991V1050M760 991V1052M834 991V1045M908 991V1052M981 991V1050M1055 991V1058M1129 991V1055"/>
<path class="re" d="M22 808L96 805L170 808L243 815L317 822L391 840L465 852L539 872L612 893L686 922L760 950L834 970L908 987L981 1003L1055 1018L1129 1030"/>
<path class="re" d="M22 1155L96 1185L170 1250L243 1322L317 1360L391 1358L465 1340L539 1320L612 1316L686 1332L760 1352L834 1338L908 1304L981 1268L1055 1265L1129 1265"/>
<path class="te" d="M22 1165L96 1240L170 1346L243 1372L317 1360L391 1346L465 1314L539 1303L612 1325L686 1372L760 1354L834 1294L908 1265L981 1252L1055 1276L1129 1265"/>
<path class="tri" d="M1118 92h22l-11 14z"/>
<path class="fr" d="M22 92H1422V754H22zM22 761H1422V1083H22zM22 1090H1422V1429H22zM1422 175h8M1422 271h8M1422 367h8M1422 466h8M1422 562h8M1422 658h8M1422 991h8M1422 1159h8M1422 1360h8M169 1429v10M317 1429v10M464 1429v10M612 1429v10M760 1429v10M907 1429v10M1055 1429v10"/>
</svg>

<svg class="c" x="930" y="630" width="678" height="520" viewBox="0 0 1568 1560" preserveAspectRatio="none">
<path class="gr" d="M15 166H1424M15 265H1424M15 364H1424M15 559H1424M15 655H1424M15 1159H1424M15 1360H1424M89 92V1429M163 92V1429M237 92V1429M311 92V1429M385 92V1429M459 92V1429M533 92V1429M607 92V1429M681 92V1429M755 92V1429M829 92V1429M903 92V1429M977 92V1429M1051 92V1429M1125 92V1429M1199 92V1429M1273 92V1429M1347 92V1429"/>
<path class="vo" d="M50 754V715M87 754V715M124 754V732M161 754V735M198 754V726M235 754V711M272 754V685M309 754V708M346 754V715M383 754V714M420 754V712M457 754V697M494 754V700M531 754V703M568 754V712M605 754V715M642 754V726M679 754V729M716 754V723M753 754V741M827 754V744M864 754V741M901 754V714M938 754V717M975 754V726M1012 754V735M1049 754V741M1086 754V721M1123 754V711M1160 754V700M1197 754V711M1234 754V711M1271 754V717M1308 754V721M1345 754V700M1382 754V732"/>
<path class="cu" d="M15 460H1424"/>
<path class="wk" d="M52 538V607M89 505V595M126 484V560M163 452V548M200 376V497M237 308V440M274 316V456M311 343V460M348 355V510M385 430V548M422 376V510M459 430V652M496 358V614M533 190V385M570 187V460M607 397V572M644 346V469M681 358V440M718 391V468M755 364V420M792 361V403M829 370V397M866 370V431M903 373V464M940 415V484M977 415V515M1014 481V519M1051 488V530M1088 484V543M1125 433V544M1162 385V477M1199 345V440M1236 148V400M1273 126V214M1310 214V429M1347 361V562M1384 460V567"/>
<path class="wb" d="M40 562h24v36h-24zM114 514h24v4h-24zM225 373h24v3h-24zM262 370h24v33h-24zM336 373h24v129h-24zM410 430h24v6h-24zM447 430h24v165h-24zM558 193h24v222h-24zM595 415h24v51h-24zM669 400h24v21h-24zM706 418h24v3h-24zM780 364h24v36h-24zM854 370h24v39h-24zM891 409h24v21h-24zM928 430h24v21h-24zM965 454h24v42h-24zM1002 496h24v15h-24zM1076 496h24v12h-24zM1187 391h24v6h-24zM1261 157h24v57h-24zM1298 214h24v174h-24zM1335 388h24v138h-24z"/>
<path class="bb" d="M15 563h12v95h-12zM77 514h24v81h-24zM151 466h24v51h-24zM188 379h24v87h-24zM299 373h24v30h-24zM373 430h24v72h-24zM484 373h24v222h-24zM521 190h24v186h-24zM632 400h24v63h-24zM743 364h24v54h-24zM817 370h24v24h-24zM1039 496h24v15h-24zM1113 454h24v51h-24zM1150 391h24v63h-24zM1224 160h24v237h-24zM1372 460h24v66h-24z"/>
<path class="hs" d="M52 1083V891M89 1083V865M126 1083V858M163 1083V843M200 1083V817M237 1083V805M274 1083V805M311 1083V805M348 1083V810M385 1083V815M422 1083V829M459 1083V865M496 1083V865M533 1083V825M570 1083V843M607 1083V865M644 1083V880M681 1083V895M718 1083V906M755 1083V908M792 1083V921M829 1083V918M866 1083V940M903 1083V954M940 1083V972M977 1083V992M1014 1083V1020M1051 1083V1028M1088 1083V1053M1125 1083V1056M1162 1083V1047M1199 1083V1040M1236 1083V993M1273 1083V966M1310 1083V981M1347 1083V1019M1384 1083V1038"/>
<path class="re" d="M15 928L52 918L89 912L126 905L163 892L200 885L237 870L274 855L311 842L348 832L385 822L422 817L459 820L533 823L607 835L644 850L718 862L755 875L829 885L866 897L903 910L940 920L977 938L1051 962L1088 980L1125 996L1199 1017L1236 1024L1273 1025L1310 1021L1384 1022"/>
<path class="re" d="M15 1180L52 1155L89 1128L270 1130L311 1160L348 1205L385 1250L422 1288L459 1303L496 1290L533 1235L570 1195L607 1187L644 1220L681 1262L718 1280L755 1273L792 1255L829 1212L866 1202L903 1205L940 1255L977 1315L1014 1358L1051 1380L1088 1385L1125 1360L1162 1290L1199 1200L1236 1158L1273 1138L1310 1148L1347 1210L1384 1285"/>
<path class="te" d="M237 1128L311 1183L348 1260L385 1278L422 1312L459 1308L496 1250L533 1177L570 1160L607 1215L644 1270L681 1282L718 1282L755 1252L792 1228L829 1158L866 1215L903 1243L940 1306L977 1357L1014 1387L1051 1391L1088 1377L1125 1305L1162 1200L1199 1155L1236 1117L1273 1137L1310 1195L1347 1305L1384 1362"/>
<path class="fr" d="M15 92H1424V754H15zM15 761H1424V1084H15zM15 1091H1424V1429H15zM1424 166h8M1424 265h8M1424 364h8M1424 559h8M1424 655h8M1424 1159h8M1424 1360h8M162 1429v10M310 1429v10M458 1429v10M606 1429v10M754 1429v10M902 1429v10M1050 1429v10M1198 1429v10M1346 1429v10"/>
</svg>

<!-- price label boxes -->
<g class="cr"><rect x="869" y="462" width="39" height="11" fill="#778899"/><rect x="1547" y="285" width="39" height="11" fill="#778899"/><rect x="869" y="786" width="39" height="11" fill="#778899"/><rect x="1548" y="778" width="39" height="11" fill="#778899"/></g>

<!-- Window titles -->
<use href="#ci" x="262" y="125"/><use href="#ci" x="939" y="125"/><use href="#ci" x="261" y="636"/><use href="#ci" x="938" y="636"/>
<text x="279" y="135" textLength="58" lengthAdjust="spacingAndGlyphs" class="gy">USDJPY,H1</text>
<text x="956" y="135" textLength="62" lengthAdjust="spacingAndGlyphs">GBPUSD,H1</text>
<text x="278" y="646" textLength="70" lengthAdjust="spacingAndGlyphs" class="gy">EURUSD,M30</text>
<text x="955" y="646" textLength="63" lengthAdjust="spacingAndGlyphs" class="gy">USDCHF,H1</text>
<g fill="none" stroke="#c0c0c0"><path d="M825 136.500h10M896 128l9 9m0-9l-9 9M825 647.500h10M896 639l9 9m0-9l-9 9M1504 647.500h9M1576 639l9 9m0-9l-9 9"/><rect x="861.500" y="128.500" width="8.500" height="8.500"/><rect x="861.500" y="639.500" width="8.500" height="8.500"/><rect x="1540.500" y="639.500" width="8" height="8.500"/></g>
<g fill="none" stroke="#111" stroke-width="1.100"><path d="M1503.500 136.500h8.500M1574 128l9.500 9.500m0-9.500l-9.500 9.500"/><rect x="1539.500" y="128.500" width="8.500" height="8.500"/></g>

<!-- Chart heads -->
<use href="#ti" x="265" y="155"/><use href="#ti" x="942" y="155"/><use href="#ti" x="264" y="665"/><use href="#ti" x="941" y="665"/>
<text class="x" x="306.500" y="164.500" textLength="176" lengthAdjust="spacingAndGlyphs">USDJPY, H1:&#160; US Dollar vs Japanese Yen</text>
<text class="x" x="983.500" y="164.500" textLength="203" lengthAdjust="spacingAndGlyphs">GBPUSD, H1:&#160; Great Britain Pound vs US Dollar</text>
<text class="x" x="305.500" y="675" textLength="147" lengthAdjust="spacingAndGlyphs">EURUSD, M30:&#160; Euro vs US Dollar</text>
<text class="x" x="982.500" y="675" textLength="173" lengthAdjust="spacingAndGlyphs">USDCHF, H1:&#160; US Dollar vs Swiss Franc</text>
<text class="x" x="940.500" y="462.500" textLength="256" lengthAdjust="spacingAndGlyphs">MACD(12,26,9) -0.000064 0.000303 Stoch(5,3,3) 45.93 47.89</text>
<text class="x" x="262.500" y="896.500" textLength="154" lengthAdjust="spacingAndGlyphs">MACD(12,26,9) -0.000216 -0.000142</text>
<text class="x" x="262.500" y="1006.500" textLength="102" lengthAdjust="spacingAndGlyphs">Stoch(8,3,3) 48.25 48.63</text>
<text class="x" x="939.500" y="896.500" textLength="148" lengthAdjust="spacingAndGlyphs">MACD(12,26,9) 0.000455 0.000563</text>
<text class="x" x="939.500" y="1006.500" textLength="102" lengthAdjust="spacingAndGlyphs">Stoch(5,3,3) 18.45 41.72</text>

<!-- Prices chart 1 -->
<text class="x" x="872.500" y="183" textLength="32" lengthAdjust="spacingAndGlyphs">131.270</text>
<text class="x" x="872.500" y="215" textLength="32" lengthAdjust="spacingAndGlyphs">131.140</text>
<text class="x" x="872.500" y="247" textLength="32" lengthAdjust="spacingAndGlyphs">131.010</text>
<text class="x" x="872.500" y="280" textLength="32" lengthAdjust="spacingAndGlyphs">130.880</text>
<text class="x" x="872.500" y="312" textLength="32" lengthAdjust="spacingAndGlyphs">130.750</text>
<text class="x" x="872.500" y="344" textLength="32" lengthAdjust="spacingAndGlyphs">130.620</text>
<text class="x" x="872.500" y="377" textLength="32" lengthAdjust="spacingAndGlyphs">130.490</text>
<text class="x" x="872.500" y="409" textLength="32" lengthAdjust="spacingAndGlyphs">130.360</text>
<text class="x" x="872.500" y="441" textLength="32" lengthAdjust="spacingAndGlyphs">130.230</text>
<text class="dk" x="872.500" y="472" textLength="32" lengthAdjust="spacingAndGlyphs">130.112</text>
<text class="x" x="872.500" y="506" textLength="32" lengthAdjust="spacingAndGlyphs">129.970</text>
<text class="x" x="872.500" y="538" textLength="32" lengthAdjust="spacingAndGlyphs">129.840</text>
<text class="x" x="872.500" y="571" textLength="32" lengthAdjust="spacingAndGlyphs">129.710</text>
<!-- Prices chart 2 -->
<text class="x" x="1550.500" y="158" textLength="32" lengthAdjust="spacingAndGlyphs">1.24100</text>
<text class="x" x="1550.500" y="191" textLength="32" lengthAdjust="spacingAndGlyphs">1.23910</text>
<text class="x" x="1550.500" y="223" textLength="32" lengthAdjust="spacingAndGlyphs">1.23720</text>
<text class="x" x="1550.500" y="256" textLength="32" lengthAdjust="spacingAndGlyphs">1.23530</text>
<text class="dk" x="1550.500" y="294.500" textLength="32" lengthAdjust="spacingAndGlyphs">1.23304</text>
<text class="x" x="1550.500" y="321" textLength="32" lengthAdjust="spacingAndGlyphs">1.23150</text>
<text class="x" x="1550.500" y="353" textLength="32" lengthAdjust="spacingAndGlyphs">1.22960</text>
<text class="x" x="1550.500" y="386" textLength="32" lengthAdjust="spacingAndGlyphs">1.22770</text>
<text class="x" x="1550.500" y="418" textLength="32" lengthAdjust="spacingAndGlyphs">1.22580</text>
<text class="x" x="1550" y="458.500" textLength="38" lengthAdjust="spacingAndGlyphs">0.001197</text>
<text class="x" x="1550" y="483" textLength="23" lengthAdjust="spacingAndGlyphs">80.00</text>
<text class="x" x="1550" y="497" textLength="38" lengthAdjust="spacingAndGlyphs">0.000000</text>
<text class="x" x="1550" y="572" textLength="23" lengthAdjust="spacingAndGlyphs">20.00</text>
<text class="x" x="1550" y="596.500" textLength="41" lengthAdjust="spacingAndGlyphs">-0.002809</text>
<!-- Prices chart 3 -->
<text class="x" x="872.500" y="692" textLength="32" lengthAdjust="spacingAndGlyphs">1.05810</text>
<text class="x" x="872.500" y="724" textLength="32" lengthAdjust="spacingAndGlyphs">1.05730</text>
<text class="x" x="872.500" y="756" textLength="32" lengthAdjust="spacingAndGlyphs">1.05650</text>
<text class="dk" x="872.500" y="795.500" textLength="32" lengthAdjust="spacingAndGlyphs">1.05553</text>
<text class="x" x="872.500" y="821" textLength="32" lengthAdjust="spacingAndGlyphs">1.05490</text>
<text class="x" x="872.500" y="853" textLength="32" lengthAdjust="spacingAndGlyphs">1.05410</text>
<text class="x" x="872" y="892" textLength="38" lengthAdjust="spacingAndGlyphs">0.000815</text>
<text class="x" x="872" y="963" textLength="38" lengthAdjust="spacingAndGlyphs">0.000000</text>
<text class="x" x="872" y="989.500" textLength="41" lengthAdjust="spacingAndGlyphs">-0.000326</text>
<text class="x" x="872.500" y="1002" textLength="27" lengthAdjust="spacingAndGlyphs">100.00</text>
<text class="x" x="872" y="1020" textLength="23" lengthAdjust="spacingAndGlyphs">80.00</text>
<text class="x" x="872" y="1087" textLength="23" lengthAdjust="spacingAndGlyphs">20.00</text>
<text class="x" x="872.500" y="1104" textLength="18" lengthAdjust="spacingAndGlyphs">0.00</text>
<!-- Prices chart 4 -->
<text class="x" x="1551" y="689" textLength="32" lengthAdjust="spacingAndGlyphs">0.99680</text>
<text class="x" x="1551" y="722" textLength="32" lengthAdjust="spacingAndGlyphs">0.99525</text>
<text class="x" x="1551" y="755" textLength="32" lengthAdjust="spacingAndGlyphs">0.99370</text>
<text class="dk" x="1551" y="787.500" textLength="32" lengthAdjust="spacingAndGlyphs">0.99215</text>
<text class="x" x="1551" y="820" textLength="32" lengthAdjust="spacingAndGlyphs">0.99060</text>
<text class="x" x="1551" y="852" textLength="32" lengthAdjust="spacingAndGlyphs">0.98905</text>
<text class="x" x="1551" y="892" textLength="38" lengthAdjust="spacingAndGlyphs">0.002337</text>
<text class="x" x="1551" y="989.500" textLength="38" lengthAdjust="spacingAndGlyphs">0.000141</text>
<text class="x" x="1551" y="1002" textLength="27" lengthAdjust="spacingAndGlyphs">100.00</text>
<text class="x" x="1551" y="1020" textLength="23" lengthAdjust="spacingAndGlyphs">80.00</text>
<text class="x" x="1551" y="1087" textLength="23" lengthAdjust="spacingAndGlyphs">20.00</text>
<text class="x" x="1551" y="1104" textLength="18" lengthAdjust="spacingAndGlyphs">0.00</text>

<!-- Time axes -->
<text class="x" x="259.500" y="612" textLength="50" lengthAdjust="spacingAndGlyphs">9 May 2022</text>
<text class="x" x="323.500" y="612" textLength="53" lengthAdjust="spacingAndGlyphs">9 May 08:00</text>
<text class="x" x="388" y="612" textLength="53" lengthAdjust="spacingAndGlyphs">9 May 12:00</text>
<text class="x" x="452" y="612" textLength="53" lengthAdjust="spacingAndGlyphs">9 May 16:00</text>
<text class="x" x="516" y="612" textLength="53" lengthAdjust="spacingAndGlyphs">9 May 20:00</text>
<text class="x" x="580" y="612" textLength="57" lengthAdjust="spacingAndGlyphs">10 May 00:00</text>
<text class="x" x="644" y="612" textLength="57" lengthAdjust="spacingAndGlyphs">10 May 04:00</text>
<text class="x" x="708" y="612" textLength="57" lengthAdjust="spacingAndGlyphs">10 May 08:00</text>
<text class="x" x="772" y="612" textLength="57" lengthAdjust="spacingAndGlyphs">10 May 12:00</text>
<text class="x" x="836" y="612" textLength="57" lengthAdjust="spacingAndGlyphs">10 May 16:00</text>

<text class="x" x="937" y="612" textLength="50" lengthAdjust="spacingAndGlyphs">9 May 2022</text>
<text class="x" x="1000.500" y="612" textLength="53" lengthAdjust="spacingAndGlyphs">9 May 08:00</text>
<text class="x" x="1064.500" y="612" textLength="53" lengthAdjust="spacingAndGlyphs">9 May 12:00</text>
<text class="x" x="1128.500" y="612" textLength="53" lengthAdjust="spacingAndGlyphs">9 May 16:00</text>
<text class="x" x="1192.500" y="612" textLength="53" lengthAdjust="spacingAndGlyphs">9 May 20:00</text>
<text class="x" x="1257" y="612" textLength="57" lengthAdjust="spacingAndGlyphs">10 May 00:00</text>
<text class="x" x="1321" y="612" textLength="57" lengthAdjust="spacingAndGlyphs">10 May 04:00</text>
<text class="x" x="1385" y="612" textLength="57" lengthAdjust="spacingAndGlyphs">10 May 08:00</text>
<text class="x" x="1449" y="612" textLength="57" lengthAdjust="spacingAndGlyphs">10 May 12:00</text>
<text class="x" x="1513" y="612" textLength="57" lengthAdjust="spacingAndGlyphs">10 May 16:00</text>

<text class="x" x="259.500" y="1120" textLength="54" lengthAdjust="spacingAndGlyphs">10 May 2022</text>
<text class="x" x="323.500" y="1120" textLength="57" lengthAdjust="spacingAndGlyphs">10 May 09:30</text>
<text class="x" x="387.500" y="1120" textLength="57" lengthAdjust="spacingAndGlyphs">10 May 10:30</text>
<text class="x" x="451" y="1120" textLength="57" lengthAdjust="spacingAndGlyphs">10 May 11:30</text>
<text class="x" x="515.500" y="1120" textLength="57" lengthAdjust="spacingAndGlyphs">10 May 12:30</text>
<text class="x" x="579.500" y="1120" textLength="57" lengthAdjust="spacingAndGlyphs">10 May 13:30</text>
<text class="x" x="643.500" y="1120" textLength="57" lengthAdjust="spacingAndGlyphs">10 May 14:30</text>
<text class="x" x="707.500" y="1120" textLength="57" lengthAdjust="spacingAndGlyphs">10 May 15:30</text>

<text class="x" x="936" y="1120" textLength="50" lengthAdjust="spacingAndGlyphs">9 May 2022</text>
<text class="x" x="1000" y="1120" textLength="53" lengthAdjust="spacingAndGlyphs">9 May 07:00</text>
<text class="x" x="1064" y="1120" textLength="53" lengthAdjust="spacingAndGlyphs">9 May 11:00</text>
<text class="x" x="1128" y="1120" textLength="53" lengthAdjust="spacingAndGlyphs">9 May 15:00</text>
<text class="x" x="1192" y="1120" textLength="53" lengthAdjust="spacingAndGlyphs">9 May 19:00</text>
<text class="x" x="1256" y="1120" textLength="53" lengthAdjust="spacingAndGlyphs">9 May 23:00</text>
<text class="x" x="1320" y="1120" textLength="57" lengthAdjust="spacingAndGlyphs">10 May 03:00</text>
<text class="x" x="1384" y="1120" textLength="57" lengthAdjust="spacingAndGlyphs">10 May 07:00</text>
<text class="x" x="1448" y="1120" textLength="57" lengthAdjust="spacingAndGlyphs">10 May 11:00</text>
<text class="x" x="1512" y="1120" textLength="57" lengthAdjust="spacingAndGlyphs">10 May 15:00</text>

<!-- Chart tab labels -->
<text x="262.500" y="1187" textLength="57" lengthAdjust="spacingAndGlyphs" class="gy">USDJPY,H1</text>
<text x="343.500" y="1187" textLength="69" lengthAdjust="spacingAndGlyphs" class="gy">EURUSD,M30</text>
<text x="436.500" y="1187" textLength="60" lengthAdjust="spacingAndGlyphs">GBPUSD,H1</text>
<text x="520" y="1187" textLength="62" lengthAdjust="spacingAndGlyphs" class="gy">USDCHF,H1</text>
<path d="M1573 1178l-3 4 3 4zM1591 1178l3 4-3 4z" fill="#bbb"/>

<!-- Toolbox -->
<text x="23" y="1213.500" textLength="26" lengthAdjust="spacingAndGlyphs">銘柄</text>
<path d="M67 1211l3.500-4 3.500 4z" fill="#111"/>
<text x="213" y="1213.500" textLength="37" lengthAdjust="spacingAndGlyphs">チケット</text>
<text x="448" y="1213.500" textLength="25" lengthAdjust="spacingAndGlyphs">時間</text>
<text x="591" y="1213.500" textLength="28" lengthAdjust="spacingAndGlyphs">タイプ</text>
<text x="739" y="1213.500" textLength="26" lengthAdjust="spacingAndGlyphs">数量</text>
<text x="885" y="1213.500" textLength="26" lengthAdjust="spacingAndGlyphs">価格</text>
<text x="967.500" y="1213.500" textLength="89.500" lengthAdjust="spacingAndGlyphs">決済逆指値(S/L)</text>
<text x="1126" y="1213.500" textLength="76.500" lengthAdjust="spacingAndGlyphs">決済指値(T/P)</text>
<text x="1324" y="1213.500" textLength="25" lengthAdjust="spacingAndGlyphs">価格</text>
<text x="1572" y="1213.500" textLength="25" lengthAdjust="spacingAndGlyphs">損益</text>
<circle cx="26" cy="1231" r="1.500" fill="#111"/>
<text x="38.500" y="1235.500" textLength="95.500" lengthAdjust="spacingAndGlyphs" class="bd">残高: 100 000.00</text>
<text x="140" y="1235.500" textLength="18" lengthAdjust="spacingAndGlyphs" class="bd" style="fill:#555">JPY</text>
<text x="168" y="1235.500" textLength="137.500" lengthAdjust="spacingAndGlyphs" class="bd">有効証拠金: 100 000.00</text>
<text x="313" y="1235.500" textLength="137" lengthAdjust="spacingAndGlyphs" class="bd">余剰証拠金: 100 000.00</text>
<text x="1576" y="1235.500" textLength="23" lengthAdjust="spacingAndGlyphs" class="bd">0.00</text>
<text x="29" y="1304.500" textLength="25" lengthAdjust="spacingAndGlyphs">取引</text>
<text x="75" y="1304.500" textLength="52" lengthAdjust="spacingAndGlyphs" class="gy">運用比率</text>
<text x="148" y="1304.500" textLength="52" lengthAdjust="spacingAndGlyphs" class="gy">口座履歴</text>
<text x="219" y="1304.500" textLength="40" lengthAdjust="spacingAndGlyphs" class="gy">ニュース</text>
<text x="262" y="1310" textLength="10" lengthAdjust="spacingAndGlyphs" class="sub">99</text>
<text x="291" y="1304.500" textLength="54" lengthAdjust="spacingAndGlyphs" class="gy">受信トレイ</text>
<text x="347" y="1310" textLength="5" lengthAdjust="spacingAndGlyphs" class="sub">7</text>
<text x="372" y="1304.500" textLength="75" lengthAdjust="spacingAndGlyphs" class="gy">指標カレンダー</text>
<text x="467" y="1304.500" textLength="26" lengthAdjust="spacingAndGlyphs" class="gy">会社</text>
<text x="513" y="1304.500" textLength="40" lengthAdjust="spacingAndGlyphs" class="gy">アラート</text>
<text x="573" y="1304.500" textLength="25" lengthAdjust="spacingAndGlyphs" class="gy">記事</text>
<text x="600" y="1310" textLength="5" lengthAdjust="spacingAndGlyphs" class="sub">3</text>
<text x="625" y="1304.500" textLength="45" lengthAdjust="spacingAndGlyphs" class="gy">ライブラリ</text>
<text x="690" y="1304.500" textLength="63" lengthAdjust="spacingAndGlyphs" class="gy">エキスパート</text>
<text x="772" y="1304.500" textLength="46" lengthAdjust="spacingAndGlyphs" class="gy">操作ログ</text>

<use href="#bag" x="1430" y="1303"/><use href="#sig" x="1488" y="1303" transform="translate(0,0)"/><use href="#cl" x="1562" y="1302"/>
<text x="1443" y="1307.500" textLength="25" lengthAdjust="spacingAndGlyphs">市場</text>
<text x="1500" y="1307.500" textLength="42" lengthAdjust="spacingAndGlyphs" class="lg">シグナル</text>
<text x="1574" y="1307.500" textLength="20" lengthAdjust="spacingAndGlyphs">VPS</text>
<use href="#bag" x="1430" y="1348"/><use href="#sig" x="1488" y="1348"/><use href="#cl" x="1562" y="1347"/>
<text x="1443" y="1352.500" textLength="25" lengthAdjust="spacingAndGlyphs">市場</text>
<text x="1500" y="1352.500" textLength="42" lengthAdjust="spacingAndGlyphs" class="lg">シグナル</text>
<text x="1574" y="1352.500" textLength="20" lengthAdjust="spacingAndGlyphs">VPS</text>

<!-- Tester tabs -->
<text x="29" y="1349" textLength="25" lengthAdjust="spacingAndGlyphs">概要</text>
<text x="75" y="1349" textLength="25" lengthAdjust="spacingAndGlyphs" class="gy">設定</text>
<text x="121" y="1349" textLength="50" lengthAdjust="spacingAndGlyphs" class="gy">パラメータ</text>
<text x="189" y="1349" textLength="61" lengthAdjust="spacingAndGlyphs" class="gy">エージェント</text>
<text x="269" y="1349" textLength="45" lengthAdjust="spacingAndGlyphs" class="gy">操作ログ</text>

<!-- Status bar -->
<text x="3.500" y="1378.500" textLength="116" lengthAdjust="spacingAndGlyphs">F1を押してヘルプを開く</text>
<text x="920" y="1378.500" textLength="24" lengthAdjust="spacingAndGlyphs">Euro</text>
<path class="cr" d="M1493.500 1379v-3M1496.500 1379v-5M1499.500 1379v-6M1502.500 1379v-8M1505.500 1379v-10" stroke="#1aa01a"/>
<text x="1513" y="1378.500" textLength="46" lengthAdjust="spacingAndGlyphs">79.21 ms</text>
<path d="M1605 1380h1M1602 1380h1M1605 1377h1M1605 1383h1M1602 1383h1M1599 1383h1" stroke="#999"/>

<!-- side vertical tabs -->
<text transform="translate(13,1311) rotate(-90)" textLength="63" lengthAdjust="spacingAndGlyphs">ツールボックス</text>
<svg x="2" y="1327" width="14" height="28" viewBox="0 0 14 28"><text transform="translate(11,28) rotate(-90)" textLength="90" lengthAdjust="spacingAndGlyphs">ストラテジーテスター</text></svg>

<!-- Cursor -->
<path d="M75.500 180.500v15l4-3.500 3 6 3-1.500-3-5.500 5-.5z" fill="#fff" stroke="#444"/>

<!-- Red annotation -->
<rect class="cr" x="3" y="153" width="246" height="785" fill="none" stroke="#f00" stroke-width="4"/>
<path class="cr" d="M6.500 938V956.500H53.500V938" fill="none" stroke="#f00" stroke-width="3"/>
<circle cx="73" cy="977" r="21.500" fill="#f01010"/>
<text x="59" y="986" textLength="28" lengthAdjust="spacingAndGlyphs" style="font-size:24px;fill:#fff">10</text>
</svg>
</body></html>
